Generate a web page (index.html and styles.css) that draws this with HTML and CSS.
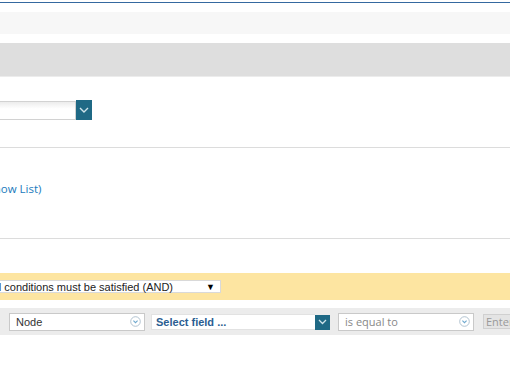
FILE: index.html
```html
<!DOCTYPE html>
<html lang="en">

<head>
    <meta charset="UTF-8">
    <meta name="viewport" content="width=device-width, initial-scale=1.0">
    <title>Report Filter</title>
    <link rel="stylesheet" href="styles.css">
</head>

<body>
    <div class="top-line"></div>
    <div class="sub-bar"></div>
    <div class="section-head"></div>

    <div class="form-row">
        <div class="combo">
            <div class="combo-box"></div>
            <div class="combo-btn">
                <svg width="10" height="6" viewBox="0 0 10 6"><path d="M1 1l4 4 4-4" fill="none" stroke="#cfe3ea" stroke-width="1.4"/></svg>
            </div>
        </div>
    </div>

    <div class="form-row list-row">
        <a href="#" class="show-list">(Show List)</a>
    </div>

    <div class="match-bar">
        <div class="match-select">
            <span>All conditions must be satisfied (AND)</span>
            <span class="arrow">&#9660;</span>
        </div>
    </div>

    <div class="condition-row">
        <div class="pick pick-node">
            <span>Node</span>
            <svg class="circle-icon" width="11" height="11" viewBox="0 0 11 11"><circle cx="5.5" cy="5.5" r="4.8" fill="#fff" stroke="#a9bccb" stroke-width="0.9"/><path d="M3.4 4.6l2.1 2.1 2.1-2.1" fill="none" stroke="#6fa9cf" stroke-width="1.1"/></svg>
        </div>
        <div class="pick-field">
            <div class="field-box">Select field ...</div>
            <div class="field-btn">
                <svg width="9" height="6" viewBox="0 0 9 6"><path d="M1 1l3.5 3.5 3.5-3.5" fill="none" stroke="#cfe3ea" stroke-width="1.3"/></svg>
            </div>
        </div>
        <div class="pick pick-op">
            <span>is equal to</span>
            <svg class="circle-icon" width="11" height="11" viewBox="0 0 11 11"><circle cx="5.5" cy="5.5" r="4.8" fill="#fff" stroke="#a9bccb" stroke-width="0.9"/><path d="M3.4 4.6l2.1 2.1 2.1-2.1" fill="none" stroke="#6fa9cf" stroke-width="1.1"/></svg>
        </div>
        <div class="value-box">Enter value</div>
    </div>
</body>

</html>
```

FILE: styles.css
```css
body {
    font-family: 'Open Sans', sans-serif;
    margin: 0;
    padding: 0;
    background-color: #fff;
    overflow: hidden;
}

.top-line {
    margin-top: 2px;
    height: 1px;
    background-color: #3569a0;
}

.sub-bar {
    margin-top: 9px;
    height: 22px;
    background-color: #f7f7f7;
}

.section-head {
    margin-top: 9px;
    height: 33px;
    background-color: #dedede;
    border-bottom: 1px solid #ececec;
}

.form-row {
    display: flex;
    align-items: center;
    height: 70px;
    border-bottom: 1px solid #dcdcdc;
}

.combo {
    display: flex;
    flex-shrink: 0;
    margin-left: -120px;
    margin-top: -4px;
}

.combo-box {
    width: 194px;
    height: 17px;
    border: 1px solid #d2d2d2;
    background: linear-gradient(#ececec, #fff 40%);
}

.combo-btn {
    width: 16px;
    height: 20px;
    margin-top: -1px;
    background-color: #1f6985;
    display: flex;
    align-items: center;
    justify-content: center;
}

.list-row {
    height: 90px;
}

.show-list {
    flex-shrink: 0;
    margin-left: -16px;
    margin-top: -9px;
    font-size: 11.5px;
    color: #1b7bbd;
    text-decoration: none;
    white-space: nowrap;
}

.match-bar {
    margin-top: 34px;
    height: 27px;
    background-color: #fde5a1;
    display: flex;
    align-items: center;
}

.match-select {
    flex-shrink: 0;
    margin-left: -14px;
    width: 231px;
    height: 11px;
    padding: 0 0 0 2px;
    border: 1px solid #d9d9d9;
    background-color: #fff;
    display: flex;
    align-items: center;
    justify-content: space-between;
    font-family: 'Liberation Sans', Arial, sans-serif;
    font-size: 11px;
    color: #222;
    white-space: nowrap;
}

.match-select .arrow {
    font-size: 9px;
    color: #000;
    margin-right: 5px;
}

.condition-row {
    margin-top: 8px;
    height: 27px;
    background-color: #ececec;
    display: flex;
    align-items: center;
    padding-left: 9px;
}

.pick {
    flex-shrink: 0;
    box-sizing: border-box;
    height: 18px;
    border: 1px solid #c9c9c9;
    background-color: #fff;
    display: flex;
    align-items: center;
    justify-content: space-between;
    padding: 0 3px 0 6px;
}

.pick-node {
    width: 136px;
    font-family: 'Liberation Sans', Arial, sans-serif;
    font-size: 11px;
    color: #333;
}

.pick-op {
    width: 136px;
    margin-left: 8px;
    font-size: 11px;
    color: #888;
}

.circle-icon {
    display: block;
}

.pick-field {
    flex-shrink: 0;
    display: flex;
    margin-left: 6px;
}

.field-box {
    box-sizing: border-box;
    width: 164px;
    height: 16px;
    padding-left: 4px;
    border: 1px solid #e2e2e2;
    border-right: none;
    background-color: #fff;
    font-family: 'Liberation Sans', Arial, sans-serif;
    font-weight: bold;
    font-size: 11px;
    line-height: 14px;
    color: #2b5e92;
}

.field-btn {
    width: 15px;
    height: 15px;
    margin-top: 1px;
    background-color: #1f6985;
    display: flex;
    align-items: center;
    justify-content: center;
}

.value-box {
    flex-shrink: 0;
    margin-left: 9px;
    height: 13px;
    padding: 0 2px;
    border: 1px solid #d0d0d0;
    background-color: #e4e4e4;
    font-size: 11px;
    line-height: 13px;
    color: #999;
    white-space: nowrap;
}
```
